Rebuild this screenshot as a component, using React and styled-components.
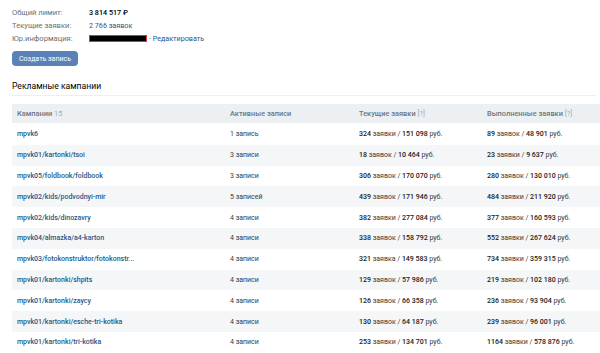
import styled, { createGlobalStyle } from "styled-components"

const GlobalStyle = createGlobalStyle`
    body {
        margin: 0;
        background: #ffffff;
        font-family: Roboto, "Noto Sans", sans-serif;
        color: #000000;
    }
`

const Page = styled.div`
    padding: 6px 0 0 12px;
    width: 588px;
    overflow: hidden;
`

const InfoList = styled.div`
    display: flex;
    flex-direction: column;
`

const InfoRow = styled.div`
    display: flex;
    align-items: center;
    height: 13px;
    font-size: 7.2px;
`

const InfoLabel = styled.span`
    width: 77px;
    font-size: 7.6px;
    color: #6d6f73;
`

const InfoValue = styled.span`
    color: ${({ link }) => (link ? "#2a5885" : "#000000")};
    font-weight: ${({ bold }) => (bold ? 500 : 400)};
`

const Hidden = styled.span`
    display: inline-block;
    width: 56px;
    height: 5px;
    background: #000000;
    border: 1px solid #e0382b;
    margin-right: 2px;
`

const EditLink = styled.span`
    color: #2a5885;
`

const Button = styled.button`
    margin-top: 6px;
    width: 66px;
    height: 15px;
    border: none;
    border-radius: 4px;
    background: #5b82b8;
    color: #ffffff;
    font-family: inherit;
    font-size: 7px;
    padding: 0;
    cursor: pointer;
`

const SectionTitle = styled.div`
    margin-top: 15px;
    font-size: 8.6px;
    color: #000000;
    padding-bottom: 4px;
    border-bottom: 1px solid #eceef1;
    margin-right: 4px;
`

const Table = styled.div`
    margin-top: 8px;
    display: flex;
    flex-direction: column;
    font-size: 7px;
`

const Row = styled.div`
    display: grid;
    grid-template-columns: 213px 129px 128px 1fr;
    align-items: center;
    height: ${({ head }) => (head ? "19px" : "20.8px")};
    background: ${({ head, shaded }) =>
        head ? "#edf0f3" : shaded ? "#f5f6f8" : "#ffffff"};
    margin-bottom: ${({ head }) => (head ? "1px" : "0")};
`

const Cell = styled.div`
    padding-left: 5px;
    white-space: nowrap;
    color: #3a3a3a;
`

const HeadCell = styled(Cell)`
    color: #6f7780;
    font-weight: 500;
    font-size: 7.4px;
`

const Muted = styled.span`
    color: #a4abb3;
    font-weight: 400;
`

const CampaignLink = styled(Cell)`
    color: #2a5885;
    font-weight: 500;
`

const Num = styled.b`
    font-weight: 500;
    color: #222222;
`

const campaigns = [
    ["mpvk6", "1 запись", [324, "заявки", "151 098"], [89, "заявок", "48 901"]],
    ["mpvk01/kartonki/tsoi", "3 записи", [18, "заявок", "10 464"], [23, "заявки", "9 637"]],
    ["mpvk05/foldbook/foldbook", "3 записи", [306, "заявок", "170 070"], [280, "заявок", "130 010"]],
    ["mpvk02/kids/podvodnyi-mir", "5 записей", [439, "заявок", "171 946"], [484, "заявки", "211 920"]],
    ["mpvk02/kids/dinozavry", "4 записи", [382, "заявки", "277 084"], [377, "заявок", "160 593"]],
    ["mpvk04/almazka/a4-karton", "4 записи", [338, "заявок", "158 792"], [552, "заявки", "267 624"]],
    ["mpvk03/fotokonstruktor/fotokonstr...", "4 записи", [321, "заявка", "149 583"], [734, "заявки", "359 315"]],
    ["mpvk01/kartonki/shpits", "4 записи", [129, "заявок", "57 986"], [219, "заявок", "102 180"]],
    ["mpvk01/kartonki/zaycy", "4 записи", [126, "заявок", "66 358"], [236, "заявок", "93 904"]],
    ["mpvk01/kartonki/esche-tri-kotika", "4 записи", [130, "заявок", "64 187"], [239, "заявок", "96 001"]],
    ["mpvk01/kartonki/tri-kotika", "4 записи", [253, "заявки", "134 701"], [1164, "заявки", "578 876"]],
]

function Orders({ data }) {
    const [count, word, sum] = data
    return (
        <Cell>
            <Num>{count}</Num> {word} / <Num>{sum}</Num> руб.
        </Cell>
    )
}

export default function App() {
    return (
        <Page>
            <GlobalStyle />
            <InfoList>
                <InfoRow>
                    <InfoLabel>Общий лимит:</InfoLabel>
                    <InfoValue bold>3 814 517 ₽</InfoValue>
                </InfoRow>
                <InfoRow>
                    <InfoLabel>Текущие заявки:</InfoLabel>
                    <InfoValue link>2 766 заявок</InfoValue>
                </InfoRow>
                <InfoRow>
                    <InfoLabel>Юр.информация:</InfoLabel>
                    <Hidden />
                    <InfoValue>·&nbsp;</InfoValue>
                    <EditLink>Редактировать</EditLink>
                </InfoRow>
            </InfoList>
            <Button>Создать запись</Button>
            <SectionTitle>Рекламные кампании</SectionTitle>
            <Table>
                <Row head>
                    <HeadCell>
                        Кампании <Muted>15</Muted>
                    </HeadCell>
                    <HeadCell>Активные записи</HeadCell>
                    <HeadCell>
                        Текущие заявки <Muted>[?]</Muted>
                    </HeadCell>
                    <HeadCell>
                        Выполненные заявки <Muted>[?]</Muted>
                    </HeadCell>
                </Row>
                {campaigns.map(([name, active, current, done], i) => (
                    <Row key={name} shaded={i % 2 === 1}>
                        <CampaignLink>{name}</CampaignLink>
                        <Cell>{active}</Cell>
                        <Orders data={current} />
                        <Orders data={done} />
                    </Row>
                ))}
            </Table>
        </Page>
    )
}
